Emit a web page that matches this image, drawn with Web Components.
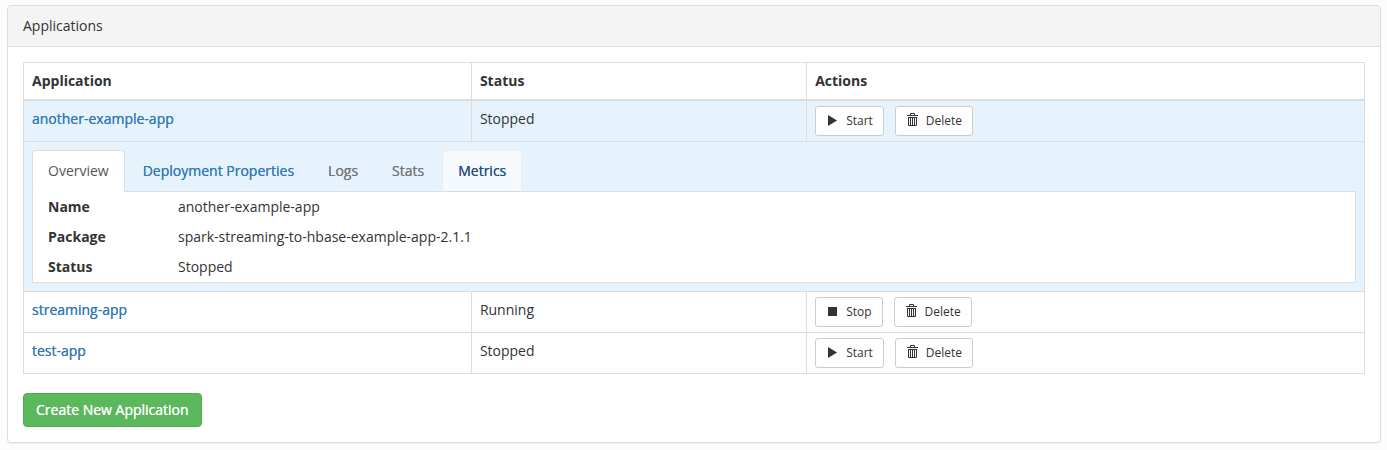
<!DOCTYPE html>
<html lang="en">
<head>
<meta charset="utf-8">
<meta name="viewport" content="width=device-width, initial-scale=1">
<title>Applications</title>
<style>
  body {
    margin: 0;
    padding: 5px 6px 7px 7px;
    background: #fcfcfc;
    color: #333;
    font: 14px/20px "Open Sans", sans-serif;
  }
</style>
</head>
<body>
<app-panel>
  <span slot="title">Applications</span>
  <app-table></app-table>
  <create-button>Create New Application</create-button>
</app-panel>

<template id="app-panel">
  <style>
    :host { display: block; background: #fff; border: 1px solid #ddd; border-radius: 4px; box-shadow: 0 1px 1px rgba(0,0,0,.05); }
    header { padding: 10px 15px; background: #f4f4f4; border-bottom: 1px solid #ddd; border-radius: 3px 3px 0 0; }
    .body { padding: 15px; }
  </style>
  <header><slot name="title"></slot></header>
  <div class="body"><slot></slot></div>
</template>

<template id="create-button">
  <style>
    :host { display: flex; margin-top: 19px; }
    button { padding: 6px 12px; font: 14px/20px "Open Sans", sans-serif; color: #fff; text-shadow: 0 0 0 currentColor; background: #5cb85c; border: 1px solid #4cae4c; border-radius: 4px; cursor: pointer; }
  </style>
  <button type="button"><slot></slot></button>
</template>

<template id="action-button">
  <style>
    :host { display: inline-flex; }
    button { display: flex; align-items: center; gap: 8px; padding: 5px 10px; font: 12px/18px "Open Sans", sans-serif; color: #333; background: #fff; border: 1px solid #ccc; border-radius: 3px; cursor: pointer; }
    svg { display: block; width: 12px; height: 16px; }
  </style>
  <button type="button"><svg viewBox="0 0 12 16" aria-hidden="true"></svg><slot></slot></button>
</template>

<template id="tab-item">
  <style>
    :host { display: block; margin: 0 2px -1px 0; }
    button { display: block; padding: 10px 15px; font: inherit; color: #337ab7; background: transparent; border: 1px solid transparent; border-radius: 4px 4px 0 0; cursor: pointer; }
    :host([state="link"]) button { text-shadow: 0 0 0 currentColor; }
    :host([state="active"]) button { color: #555; background: #fff; border-color: #ddd #ddd #fff; }
    :host([state="hover"]) button { color: #23527c; text-shadow: 0 0 0 currentColor; background: #f5fafe; border-color: #eee #eee #ddd; }
    button:disabled { color: #777; text-shadow: 0 0 0 currentColor; cursor: default; }
  </style>
  <button type="button" role="tab"><slot></slot></button>
</template>

<template id="app-details">
  <style>
    :host { display: block; }
    nav { display: flex; border-bottom: 1px solid #ddd; }
    dl { display: grid; grid-template-columns: 130px 1fr; margin: 0; padding: 0 15px; background: #fff; border: 1px solid #ddd; border-top: 0; }
    dt, dd { margin: 0; padding: 5px 0; }
    dt { font-weight: 700; }
  </style>
  <nav role="tablist">
    <tab-item state="active">Overview</tab-item>
    <tab-item state="link">Deployment Properties</tab-item>
    <tab-item state="disabled">Logs</tab-item>
    <tab-item state="disabled">Stats</tab-item>
    <tab-item state="hover">Metrics</tab-item>
  </nav>
  <dl>
    <dt>Name</dt><dd>another-example-app</dd>
    <dt>Package</dt><dd>spark-streaming-to-hbase-example-app-2.1.1</dd>
    <dt>Status</dt><dd>Stopped</dd>
  </dl>
</template>

<template id="app-table">
  <style>
    :host { display: block; }
    table { width: 100%; table-layout: fixed; border-spacing: 0; border: solid #ddd; border-width: 1px 0 0 1px; }
    th, td { box-sizing: border-box; padding: 8px; text-align: left; vertical-align: top; border: solid #ddd; border-width: 0 1px 1px 0; }
    th { font-weight: 700; border-bottom-width: 2px; }
    th:nth-child(1) { width: 33.4%; }
    th:nth-child(2) { width: 25%; }
    .selected td { background: #e6f3fd; }
    td.actions { padding: 5px 8px; }
    .buttons { display: flex; gap: 11px; }
    a { color: #337ab7; text-decoration: none; text-shadow: 0 0 0 currentColor; }
    a:hover { text-decoration: underline; }
  </style>
  <table>
    <thead><tr><th scope="col">Application</th><th scope="col">Status</th><th scope="col">Actions</th></tr></thead>
    <tbody>
      <tr class="selected">
        <td><a href="#another-example-app">another-example-app</a></td><td>Stopped</td>
        <td class="actions"><div class="buttons"><action-button icon="play">Start</action-button><action-button icon="trash">Delete</action-button></div></td>
      </tr>
      <tr class="selected"><td colspan="3"><app-details></app-details></td></tr>
      <tr>
        <td><a href="#streaming-app">streaming-app</a></td><td>Running</td>
        <td class="actions"><div class="buttons"><action-button icon="stop">Stop</action-button><action-button icon="trash">Delete</action-button></div></td>
      </tr>
      <tr>
        <td><a href="#test-app">test-app</a></td><td>Stopped</td>
        <td class="actions"><div class="buttons"><action-button icon="play">Start</action-button><action-button icon="trash">Delete</action-button></div></td>
      </tr>
    </tbody>
  </table>
</template>

<script>
  class TemplateElement extends HTMLElement {
    constructor() {
      super();
      const template = document.getElementById(this.localName);
      this.attachShadow({ mode: "open" }).append(document.importNode(template.content, true));
    }
  }

  const ICONS = {
    play: '<path d="M2 2 11 7.5 2 13z" fill="#333"/>',
    stop: '<path d="M2 3h9v9H2z" fill="#333"/>',
    trash: '<path d="M1 2.5h11M4.5 2.5v-2h4v2M2.5 4v8.5h8V4M2 4.5h9M4.5 4.5v8M6.5 4.5v8M8.5 4.5v8" fill="none" stroke="#333"/>'
  };

  class ActionButton extends TemplateElement {
    connectedCallback() {
      this.shadowRoot.querySelector("svg").innerHTML = ICONS[this.getAttribute("icon")];
    }
  }

  class TabItem extends TemplateElement {
    connectedCallback() {
      const state = this.getAttribute("state");
      const button = this.shadowRoot.querySelector("button");
      button.disabled = state === "disabled";
      button.setAttribute("aria-selected", String(state === "active"));
    }
  }

  customElements.define("action-button", ActionButton);
  customElements.define("tab-item", TabItem);
  customElements.define("create-button", class extends TemplateElement {});
  customElements.define("app-details", class extends TemplateElement {});
  customElements.define("app-table", class extends TemplateElement {});
  customElements.define("app-panel", class extends TemplateElement {});
</script>
</body>
</html>
